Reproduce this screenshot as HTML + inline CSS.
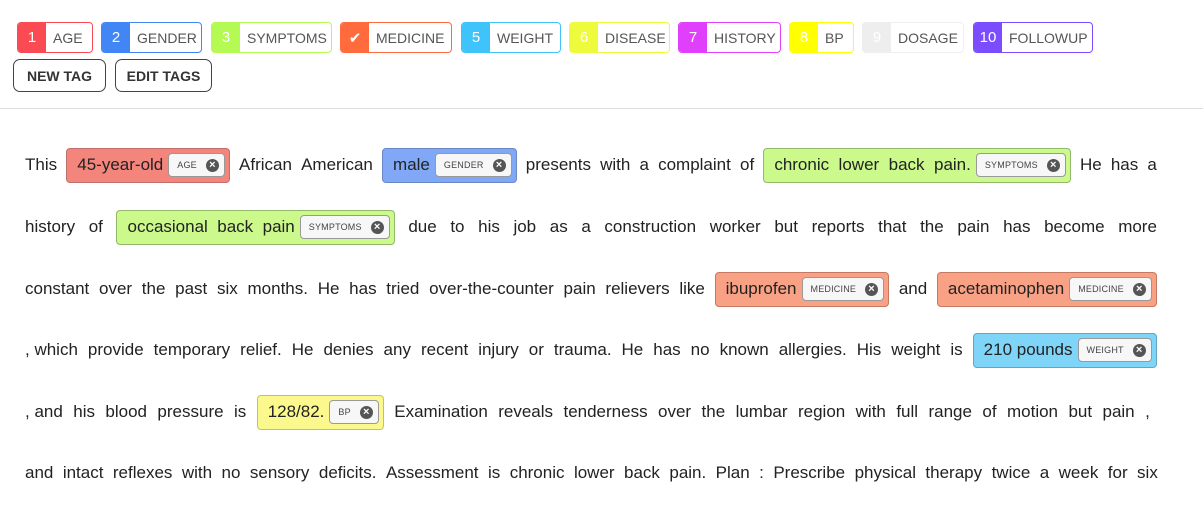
<!DOCTYPE html><html><head><style>
body{margin:0;width:1203px;height:517px;overflow:hidden;background:#fff;font-family:"Liberation Sans",sans-serif;color:#222}
.t{position:absolute;top:22px;height:29px;border:1px solid;border-radius:4px;display:flex;font-size:14px;color:#555;overflow:hidden;background:#fff}
.t b{font-weight:normal;color:#fff;width:28px;display:flex;align-items:center;justify-content:center;font-size:15px}
.t span{display:flex;align-items:center;padding-left:7px}
.btn{position:absolute;top:59px;height:31px;border:1.5px solid #444;border-radius:7px;font-size:14px;font-weight:bold;color:#333;display:flex;align-items:center;justify-content:center}
.hr{position:absolute;top:108px;left:0;width:1203px;height:1px;background:#ddd}
.ln{position:absolute;left:25px;width:1132px;font-size:17px;white-space:nowrap;display:flex;justify-content:space-between;align-items:center;height:36px}
.m{display:inline-flex;align-items:center;height:35px;border:1px solid;border-radius:4px;padding:0 4px 0 10px;font-size:17px;color:#222;box-sizing:border-box}
.c{display:inline-flex;align-items:center;margin-left:5px;height:22px;border:1px solid #999;border-radius:4px;background:#f7f7f7;font-size:9px;color:#444;padding:0 5px 0 8px;letter-spacing:.2px}
.c i{display:inline-flex;align-items:center;justify-content:center;width:13px;height:13px;border-radius:50%;background:#555;color:#fff;font-style:normal;font-size:11px;margin-left:9px;font-weight:bold;line-height:1}
</style></head><body>
<div class="t" style="left:17px;width:74px;border-color:#fa4b55"><b style="background:#fa4b55">1</b><span>AGE</span></div>
<div class="t" style="left:101px;width:99px;border-color:#4286f5"><b style="background:#4286f5">2</b><span>GENDER</span></div>
<div class="t" style="left:211px;width:119px;border-color:#b5fa52"><b style="background:#b5fa52">3</b><span>SYMPTOMS</span></div>
<div class="t" style="left:340px;width:110px;border-color:#ff6b3c"><b style="background:#ff6b3c">✔</b><span>MEDICINE</span></div>
<div class="t" style="left:461px;width:98px;border-color:#3ec3fa"><b style="background:#3ec3fa">5</b><span>WEIGHT</span></div>
<div class="t" style="left:569px;width:99px;border-color:#eefa3c"><b style="background:#eefa3c">6</b><span>DISEASE</span></div>
<div class="t" style="left:678px;width:101px;border-color:#e040fb"><b style="background:#e040fb">7</b><span>HISTORY</span></div>
<div class="t" style="left:789px;width:63px;border-color:#ffff00"><b style="background:#ffff00">8</b><span>BP</span></div>
<div class="t" style="left:862px;width:100px;border-color:#eee"><b style="background:#eee">9</b><span>DOSAGE</span></div>
<div class="t" style="left:973px;width:118px;border-color:#7c4dff"><b style="background:#7c4dff">10</b><span>FOLLOWUP</span></div>
<div class="btn" style="left:13px;width:91px">NEW TAG</div>
<div class="btn" style="left:115px;width:95px">EDIT TAGS</div>
<div class="hr"></div>

<div class="ln" style="top:147px"><span>This</span><span class="m" style="background:#f4857d;border-color:#c0706a">45-year-old<span class="c">AGE<i>×</i></span></span><span>African</span><span>American</span><span class="m" style="background:#80a8f6;border-color:#6a88c4">male<span class="c">GENDER<i>×</i></span></span><span>presents</span><span>with</span><span>a</span><span>complaint</span><span>of</span><span class="m" style="background:#ccf98c;border-color:#94b86a">chronic&nbsp; lower&nbsp; back&nbsp; pain.<span class="c">SYMPTOMS<i>×</i></span></span><span>He</span><span>has</span><span>a</span></div>
<div class="ln" style="top:209px"><span>history</span><span>of</span><span class="m" style="background:#ccf98c;border-color:#94b86a">occasional&nbsp; back&nbsp; pain<span class="c">SYMPTOMS<i>×</i></span></span><span>due</span><span>to</span><span>his</span><span>job</span><span>as</span><span>a</span><span>construction</span><span>worker</span><span>but</span><span>reports</span><span>that</span><span>the</span><span>pain</span><span>has</span><span>become</span><span>more</span></div>
<div class="ln" style="top:271px"><span>constant</span><span>over</span><span>the</span><span>past</span><span>six</span><span>months.</span><span>He</span><span>has</span><span>tried</span><span>over-the-counter</span><span>pain</span><span>relievers</span><span>like</span><span class="m" style="background:#f9a184;border-color:#c47a62">ibuprofen<span class="c">MEDICINE<i>×</i></span></span><span>and</span><span class="m" style="background:#f9a184;border-color:#c47a62">acetaminophen<span class="c">MEDICINE<i>×</i></span></span></div>
<div class="ln" style="top:332px"><span>, which</span><span>provide</span><span>temporary</span><span>relief.</span><span>He</span><span>denies</span><span>any</span><span>recent</span><span>injury</span><span>or</span><span>trauma.</span><span>He</span><span>has</span><span>no</span><span>known</span><span>allergies.</span><span>His</span><span>weight</span><span>is</span><span class="m" style="background:#7fd5f8;border-color:#62a6c2">210 pounds<span class="c">WEIGHT<i>×</i></span></span></div>
<div class="ln" style="top:394px;width:1125px"><span>, and</span><span>his</span><span>blood</span><span>pressure</span><span>is</span><span class="m" style="background:#fbf98e;border-color:#c4c06a">128/82.<span class="c">BP<i>×</i></span></span><span>Examination</span><span>reveals</span><span>tenderness</span><span>over</span><span>the</span><span>lumbar</span><span>region</span><span>with</span><span>full</span><span>range</span><span>of</span><span>motion</span><span>but</span><span>pain</span><span>,</span></div>
<div class="ln" style="top:455px;width:1133px"><span>and</span><span>intact</span><span>reflexes</span><span>with</span><span>no</span><span>sensory</span><span>deficits.</span><span>Assessment</span><span>is</span><span>chronic</span><span>lower</span><span>back</span><span>pain.</span><span>Plan</span><span>:</span><span>Prescribe</span><span>physical</span><span>therapy</span><span>twice</span><span>a</span><span>week</span><span>for</span><span>six</span></div>
</body></html>
